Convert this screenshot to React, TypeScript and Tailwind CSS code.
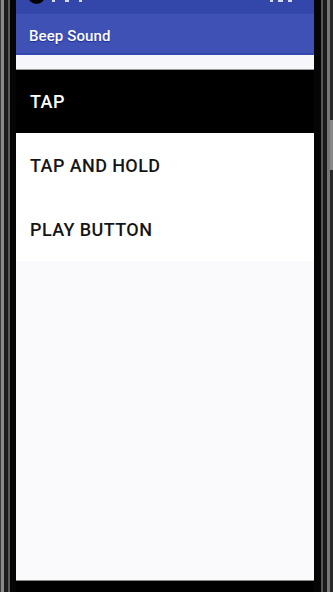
import React from 'react';

const items = ['TAP', 'TAP AND HOLD', 'PLAY BUTTON'];

function StatusBar() {
  return (
    <div className="relative h-[14px] bg-[#3346aa] shrink-0 overflow-hidden">
      {/* camera cutout */}
      <div className="absolute left-[12px] top-[-13px] w-[17px] h-[17px] rounded-full bg-black" />
      <div className="absolute left-[36px] top-0 flex gap-[10px]">
        <div className="w-[3px] h-[2px] bg-white/80" />
        <div className="w-[4px] h-[2px] bg-white/80" />
        <div className="w-[3px] h-[2px] bg-white/80" />
      </div>
      <div className="absolute right-[22px] top-0 flex gap-[5px]">
        <div className="w-[3px] h-[2px] bg-white/80" />
        <div className="w-[5px] h-[2px] bg-white/80" />
        <div className="w-[4px] h-[2px] bg-white/80" />
      </div>
    </div>
  );
}

export default function App() {
  return (
    <div
      className="w-[333px] h-[592px] bg-black flex overflow-hidden"
      style={{ fontFamily: 'Roboto, "Noto Sans", sans-serif' }}
    >
      {/* left bezel */}
      <div className="flex h-full shrink-0">
        <div className="w-[1px] bg-[#3a3a3a]" />
        <div className="w-[3px] bg-[#8a8a8a]" />
        <div className="w-[4px] bg-[#1c1c1c]" />
        <div className="w-[2px] bg-[#5a5a5a]" />
        <div className="w-[6px] bg-[#050505]" />
      </div>

      {/* screen */}
      <div className="w-[298px] h-[581px] flex flex-col bg-[#faf9fc] shrink-0 border-b border-[#8a8a8a]">
        <StatusBar />
        <div className="h-[41px] bg-[#3f51b5] flex items-center pt-[5px] px-[13px] shrink-0 border-b-2 border-[#3347ac]">
          <span
            className="text-white text-[15px] font-medium tracking-[0.1px]"
            style={{ textShadow: '0 1px 1px #1a2a9a' }}
          >
            Beep Sound
          </span>
        </div>
        <div className="h-[15px] bg-[#f7f6fb] border-b border-[#9a9a9a] shrink-0" />
        <div className="flex flex-col">
          {items.map((item, i) => (
            <div
              key={item}
              className={`flex items-center px-[14px] ${
                i === 0 ? 'h-[63px] bg-black text-white' : 'h-[64px] bg-white text-[#151515]'
              }`}
            >
              <span className="text-[18px] font-medium tracking-[0.4px]">{item}</span>
            </div>
          ))}
        </div>
      </div>

      {/* right bezel */}
      <div className="flex h-full shrink-0">
        <div className="w-[7px] bg-[#050505]" />
        <div className="w-[2px] bg-[#555]" />
        <div className="w-[4px] bg-[#1a1a1a]" />
        <div className="w-[3px] bg-[#777]" />
        <div className="w-[3px] flex flex-col">
          <div className="h-[120px] bg-[#2a2a2a]" />
          <div className="h-[50px] bg-[#888]" />
          <div className="flex-1 bg-[#2a2a2a]" />
        </div>
      </div>
    </div>
  );
}
